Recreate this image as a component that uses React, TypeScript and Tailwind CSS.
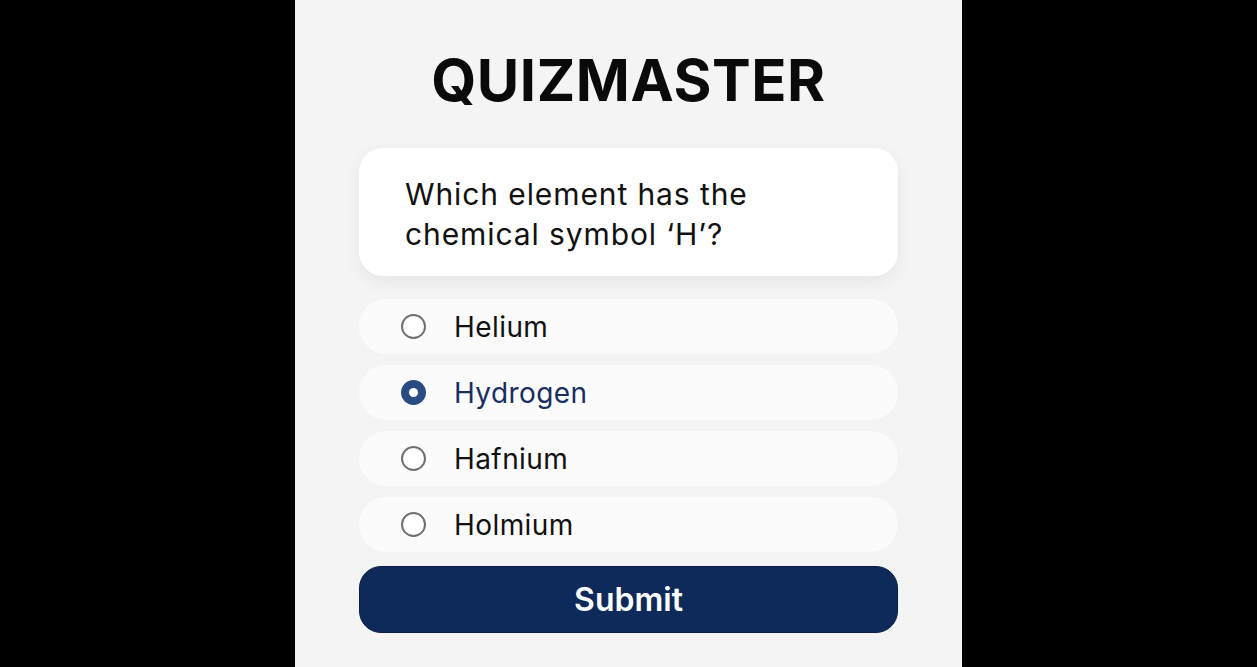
import React, { useState } from 'react';

const options = ['Helium', 'Hydrogen', 'Hafnium', 'Holmium'];

export default function App() {
  const [picked, setPicked] = useState('Hydrogen');

  return (
    <div className="min-h-screen w-full bg-black flex justify-center" style={{ fontFamily: 'Inter, "Noto Sans", sans-serif' }}>
      <div className="w-[667px] min-h-[667px] bg-[#f4f4f4] flex flex-col items-center pt-[51px]">
        <h1 className="text-[58px] leading-[58px] font-bold tracking-[0.01em] text-[#0a0a0a]">QUIZMASTER</h1>

        <div className="mt-[39px] w-[539px] h-[128px] bg-white rounded-[24px] shadow-[0_6px_18px_rgba(0,0,0,0.06)] pl-[46px] pr-6 pt-[26px]">
          <p className="text-[30px] leading-[40px] tracking-[0.03em] text-[#111111]">
            Which element has the
            <br />
            chemical symbol ‘H’?
          </p>
        </div>

        <div className="mt-[23px] w-[539px] flex flex-col gap-[11px]">
          {options.map((o) => {
            const on = picked === o;
            return (
              <button
                key={o}
                onClick={() => setPicked(o)}
                className="h-[55px] w-full bg-[#fbfbfb] rounded-[28px] flex items-center pl-[42px] text-left"
              >
                {on ? (
                  <span className="w-[25px] h-[25px] rounded-full bg-[#2b4c80] flex items-center justify-center">
                    <span className="w-[9px] h-[9px] rounded-full bg-white" />
                  </span>
                ) : (
                  <span className="w-[25px] h-[25px] rounded-full border-2 border-[#707070] bg-white" />
                )}
                <span className={`ml-[28px] text-[28px] leading-none tracking-[0.015em] ${on ? 'text-[#1a2f5f]' : 'text-[#111111]'}`}>{o}</span>
              </button>
            );
          })}
        </div>

        <button className="mt-[14px] w-[539px] h-[67px] rounded-[22px] bg-[#0e2a5b] border border-[#0a1f45] text-white text-[32px] font-semibold">
          Submit
        </button>
      </div>
    </div>
  );
}
